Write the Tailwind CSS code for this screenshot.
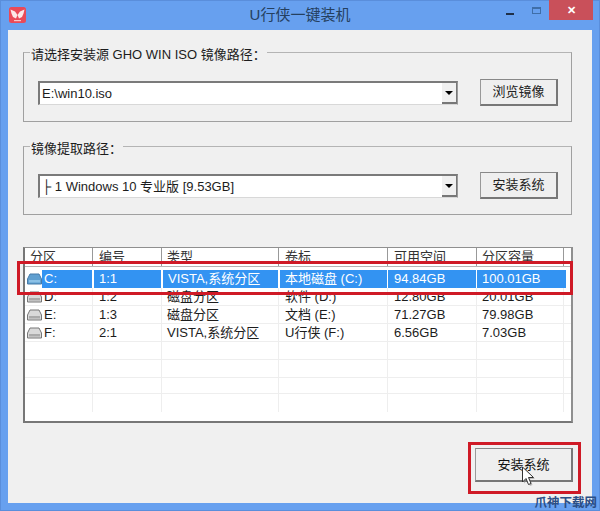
<!DOCTYPE html>
<html lang="zh-CN">
<head>
<meta charset="UTF-8" />
<script src="https://cdn.jsdelivr.net/npm/@tailwindcss/browser@4"></script>
<title>U行侠一键装机</title>
</head>
<body class="overflow-hidden">
<div class="relative w-[600px] h-[511px] bg-[#67a0ef] ring-1 ring-inset ring-[#5a8edb] flex flex-col text-[13px] text-[#1c1c1c] font-['Liberation_Sans','Noto_Sans_CJK_SC',sans-serif]">
	<!-- title bar -->
	<div class="h-[30px] shrink-0 flex items-start relative">
		<svg class="ml-[9px] mt-[7px]" width="17" height="16" viewBox="0 0 17 16">
			<rect width="17" height="16" rx="2.500" fill="#ea4a58" />
			<path d="M1.500 2.500l4.500 2 2.500 3.500-1.500 3.500-3-1.500-1.500-3.500z" fill="#fde8e8" />
			<path d="M15.500 2.500l-4.500 2-2.500 3.500 1.500 3.500 3-1.500 1.500-3.500z" fill="#fde8e8" />
			<rect x="5" y="13" width="7" height="1.200" fill="#f9c4c8" />
		</svg>
		<div class="absolute left-0 right-0 top-[6px] text-center text-[15px] leading-[17px] text-[#25405f]">U行侠一键装机</div>
		<div class="ml-auto flex items-start mr-[7px]">
			<div class="w-[8px] h-[2px] bg-[#1f3048] mt-[13px] mr-[18px]"></div>
			<div class="w-[9px] h-[7px] mt-[7px] mr-[8px] border border-[#3f6ea8] border-t-2"></div>
			<div class="w-[44px] h-[20px] bg-[#c9505a] flex items-center justify-center text-white text-[11px] font-bold leading-none">✕</div>
		</div>
	</div>

	<!-- client area -->
	<div class="mx-[8px] h-[473px] bg-[#f0f0f0] px-[15px] flex flex-col">
		<fieldset class="mt-[14px] w-[549px] h-[78px] border border-[#a0a0a0] border-t-[#b4b4b4] pl-[14px] pr-[13px] flex items-start">
			<legend class="-ml-[8px] px-[1px] text-[13px] leading-[15px] translate-y-[2px]">请选择安装源 GHO WIN ISO 镜像路径<span class="font-['Noto_Sans_CJK_TC']">：</span></legend>
			<div class="w-full flex items-start justify-between mt-[21px]">
				<div class="w-[420px] h-[24px] bg-white border-[2px] border-b border-r border-[#7a7a7a] border-b-[#d8d8d8] border-r-[#9a9a9a] flex items-center pl-[2px]">
					<span class="flex-1 leading-[20px]">E:\win10.iso</span>
					<div class="w-[15px] h-[21px] bg-[#f0f0f0] border-b-2 border-r border-[#777] flex items-center justify-center">
						<div class="w-0 h-0 border-x-[4px] border-x-transparent border-t-[4px] border-t-black"></div>
					</div>
				</div>
				<button class="w-[78px] h-[27px] -mt-[2px] bg-[#efefef] border border-[#777] border-r-2 border-b-2 border-l-[#999] border-t-[#888] text-[#222]">浏览镜像</button>
			</div>
		</fieldset>

		<fieldset class="mt-[16px] w-[549px] h-[77px] border border-[#a0a0a0] border-t-[#b4b4b4] pl-[14px] pr-[13px] flex items-start">
			<legend class="-ml-[8px] px-[1px] text-[13px] leading-[15px] translate-y-[2px]">镜像提取路径<span class="font-['Noto_Sans_CJK_TC']">：</span></legend>
			<div class="w-full flex items-start justify-between mt-[20px]">
				<div class="w-[420px] h-[24px] bg-white border-[2px] border-b border-r border-[#7a7a7a] border-b-[#d8d8d8] border-r-[#9a9a9a] flex items-center pl-[2px]">
					<span class="flex-1 leading-[20px]">├ 1 Windows 10 专业版 [9.53GB]</span>
					<div class="w-[15px] h-[21px] bg-[#f0f0f0] border-b-2 border-r border-[#777] flex items-center justify-center">
						<div class="w-0 h-0 border-x-[4px] border-x-transparent border-t-[4px] border-t-black"></div>
					</div>
				</div>
				<button class="w-[78px] h-[27px] -mt-[2px] bg-[#efefef] border border-[#777] border-r-2 border-b-2 border-l-[#999] border-t-[#888] text-[#222]">安装系统</button>
			</div>
		</fieldset>

		<!-- partition list -->
		<div class="mt-[32px] w-[550px] h-[176px] bg-white border-2 border-[#8f8f8f] border-t border-l-[#777] border-b-[#777] overflow-hidden">
			<div class="h-[19px] flex border-b border-[#b5b5b5] leading-[17px] text-[#333]">
				<div class="w-[68px] pl-[5px] border-r border-[#999]">分区</div>
				<div class="w-[69px] pl-[6px] border-r border-[#999]">编号</div>
				<div class="w-[117px] pl-[5px] border-r border-[#999]">类型</div>
				<div class="w-[109px] pl-[6px] border-r border-[#999]">卷标</div>
				<div class="w-[89px] pl-[6px] border-r border-[#999]">可用空间</div>
				<div class="w-[87px] pl-[5px] border-r border-[#999]">分区容量</div>
			</div>
			<!-- selected row -->
			<div class="h-[18px] mt-[3px] flex leading-[18px] text-white">
				<div class="flex items-center pl-[2px]"><svg class="shrink-0" width="15" height="12" viewBox="0 0 15 12"><path d="M3 1h9l2.500 5v5H.5V6z" fill="#5f9fd0" stroke="#477ba8" /><rect x="2" y="7" width="11" height="2.500" fill="#8cc1e6" /></svg><span class="w-[50px] h-[18px] pl-[2px] bg-[#3393f2]">C:</span></div>
				<div class="w-[67px] pl-[5px] ml-[2px] bg-[#3393f2]">1:1</div>
				<div class="w-[115px] pl-[5px] ml-[2px] bg-[#3393f2]">VISTA,系统分区</div>
				<div class="w-[107px] pl-[5px] ml-[2px] bg-[#3393f2]">本地磁盘 (C:)</div>
				<div class="w-[88px] pl-[6px] ml-[1px] bg-[#3393f2]">94.84GB</div>
				<div class="w-[89px] pl-[5px] ml-[1px] bg-[#3393f2]">100.01GB</div>
			</div>
			<div class="flex h-[18px] leading-[18px] border-b border-[#eee]">
				<div class="w-[68px] pl-[2px] flex items-center border-r border-[#eee]"><svg class="shrink-0" width="15" height="12" viewBox="0 0 15 12"><path d="M3 1h9l2.500 5v5H.5V6z" fill="#d9d9d9" stroke="#777" /><rect x="2" y="7" width="11" height="2.500" fill="#aaa" /></svg><span class="ml-[2px]">D:</span></div>
				<div class="w-[69px] pl-[6px] border-r border-[#eee]">1:2</div>
				<div class="w-[117px] pl-[5px] border-r border-[#eee]">磁盘分区</div>
				<div class="w-[109px] pl-[6px] border-r border-[#eee]">软件 (D:)</div>
				<div class="w-[89px] pl-[6px] border-r border-[#eee]">12.80GB</div>
				<div class="w-[87px] pl-[5px] border-r border-[#eee]">20.01GB</div>
			</div>
			<div class="flex h-[18px] leading-[18px] border-b border-[#eee]">
				<div class="w-[68px] pl-[2px] flex items-center border-r border-[#eee]"><svg class="shrink-0" width="15" height="12" viewBox="0 0 15 12"><path d="M3 1h9l2.500 5v5H.5V6z" fill="#d9d9d9" stroke="#777" /><rect x="2" y="7" width="11" height="2.500" fill="#aaa" /></svg><span class="ml-[2px]">E:</span></div>
				<div class="w-[69px] pl-[6px] border-r border-[#eee]">1:3</div>
				<div class="w-[117px] pl-[5px] border-r border-[#eee]">磁盘分区</div>
				<div class="w-[109px] pl-[6px] border-r border-[#eee]">文档 (E:)</div>
				<div class="w-[89px] pl-[6px] border-r border-[#eee]">71.27GB</div>
				<div class="w-[87px] pl-[5px] border-r border-[#eee]">79.98GB</div>
			</div>
			<div class="flex h-[18px] leading-[18px] border-b border-[#eee]">
				<div class="w-[68px] pl-[2px] flex items-center border-r border-[#eee]"><svg class="shrink-0" width="15" height="12" viewBox="0 0 15 12"><path d="M3 1h9l2.500 5v5H.5V6z" fill="#d9d9d9" stroke="#777" /><rect x="2" y="7" width="11" height="2.500" fill="#aaa" /></svg><span class="ml-[2px]">F:</span></div>
				<div class="w-[69px] pl-[6px] border-r border-[#eee]">2:1</div>
				<div class="w-[117px] pl-[5px] border-r border-[#eee]">VISTA,系统分区</div>
				<div class="w-[109px] pl-[6px] border-r border-[#eee]">U行侠 (F:)</div>
				<div class="w-[89px] pl-[6px] border-r border-[#eee]">6.56GB</div>
				<div class="w-[87px] pl-[5px] border-r border-[#eee]">7.03GB</div>
			</div>
			<div class="flex h-[18px] border-b border-[#eee]"><div class="w-[68px] border-r border-[#eee]"></div><div class="w-[69px] border-r border-[#eee]"></div><div class="w-[117px] border-r border-[#eee]"></div><div class="w-[109px] border-r border-[#eee]"></div><div class="w-[89px] border-r border-[#eee]"></div><div class="w-[87px] border-r border-[#eee]"></div></div>
			<div class="flex h-[18px] border-b border-[#eee]"><div class="w-[68px] border-r border-[#eee]"></div><div class="w-[69px] border-r border-[#eee]"></div><div class="w-[117px] border-r border-[#eee]"></div><div class="w-[109px] border-r border-[#eee]"></div><div class="w-[89px] border-r border-[#eee]"></div><div class="w-[87px] border-r border-[#eee]"></div></div>
			<div class="flex h-[16px] border-b border-[#eee]"><div class="w-[68px] border-r border-[#eee]"></div><div class="w-[69px] border-r border-[#eee]"></div><div class="w-[117px] border-r border-[#eee]"></div><div class="w-[109px] border-r border-[#eee]"></div><div class="w-[89px] border-r border-[#eee]"></div><div class="w-[87px] border-r border-[#eee]"></div></div>
			<div class="flex h-[18px]"><div class="w-[68px] border-r border-[#eee]"></div><div class="w-[69px] border-r border-[#eee]"></div><div class="w-[117px] border-r border-[#eee]"></div><div class="w-[109px] border-r border-[#eee]"></div><div class="w-[89px] border-r border-[#eee]"></div><div class="w-[87px] border-r border-[#eee]"></div></div>
		</div>

		<div class="flex justify-end mt-[25px] mr-[4px]">
			<button class="w-[98px] h-[34px] bg-[#efefef] border border-[#777] border-r-2 border-b-2 border-l-[#999] border-t-[#888] text-[#111]">安装系统</button>
		</div>
	</div>

	<!-- red annotations over the screenshot -->
	<div class="absolute left-[17px] top-[261px] w-[556px] h-[34px] border-[3px] border-[#cf1a26]"></div>
	<div class="absolute left-[468px] top-[442px] w-[113px] h-[52px] border-[3px] border-[#cf1a26]"></div>
	<svg class="absolute left-[521px] top-[466px]" width="17" height="22" viewBox="0 0 17 22">
		<path d="M3 2.500v15l3.500-3.500 2.500 6 2.500-1-2.500-6h5z" fill="#888" opacity="0.5" />
		<path d="M1.500 1v15l3.500-3.500 2.500 6 2.500-1-2.500-6h5z" fill="#fff" stroke="#333" stroke-width="1" />
	</svg>
	<div class="absolute right-[3px] bottom-[1px] text-[12.5px] leading-[14px] font-bold text-[#2c4f86]">爪神下载网</div>
</div>
</body>
</html>
